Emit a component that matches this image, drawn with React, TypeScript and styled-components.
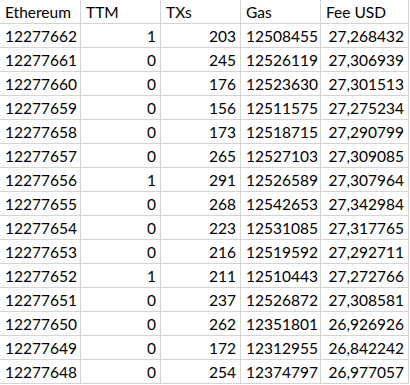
import React from "react";
import styled, { createGlobalStyle } from "styled-components";

type Row = [string, number, number, string, string];

const rows: Row[] = [
  ["12277662", 1, 203, "12508455", "27,268432"],
  ["12277661", 0, 245, "12526119", "27,306939"],
  ["12277660", 0, 176, "12523630", "27,301513"],
  ["12277659", 0, 156, "12511575", "27,275234"],
  ["12277658", 0, 173, "12518715", "27,290799"],
  ["12277657", 0, 265, "12527103", "27,309085"],
  ["12277656", 1, 291, "12526589", "27,307964"],
  ["12277655", 0, 268, "12542653", "27,342984"],
  ["12277654", 0, 223, "12531085", "27,317765"],
  ["12277653", 0, 216, "12519592", "27,292711"],
  ["12277652", 1, 211, "12510443", "27,272766"],
  ["12277651", 0, 237, "12526872", "27,308581"],
  ["12277650", 0, 262, "12351801", "26,926926"],
  ["12277649", 0, 172, "12312955", "26,842242"],
  ["12277648", 0, 254, "12374797", "26,977057"],
];

const headers = ["Ethereum", "TTM", "TXs", "Gas", "Fee USD"];
// true = right aligned
const rightCols = [false, true, true, false, true];

const App: React.FC = () => {
  return (
    <>
      <GlobalStyle />
      <Sheet>
        {headers.map((h) => (
          <Cell key={h}>{h}</Cell>
        ))}
        {rows.map((r) =>
          r.map((v, i) => (
            <Cell key={r[0] + i} $right={rightCols[i]}>
              {v}
            </Cell>
          ))
        )}
      </Sheet>
    </>
  );
};

const GlobalStyle = createGlobalStyle`
  html, body {
    margin: 0;
    padding: 0;
    background: #ffffff;
  }
`;

const Sheet = styled.div`
  display: grid;
  grid-template-columns: 81px 80px 80px 80px 88px;
  grid-auto-rows: 24px;
  width: 409px;
  font-family: Lato, "Open Sans", sans-serif;
  font-size: 15.5px;
  color: #000;
`;

const Cell = styled.div<{ $right?: boolean }>`
  box-sizing: border-box;
  border-right: 1px solid #d4d4d4;
  border-bottom: 1px solid #d4d4d4;
  padding: 1px 4px 0 5px;
  line-height: 22px;
  white-space: nowrap;
  overflow: hidden;
  text-align: ${(p) => (p.$right ? "right" : "left")};
`;

export default App;
